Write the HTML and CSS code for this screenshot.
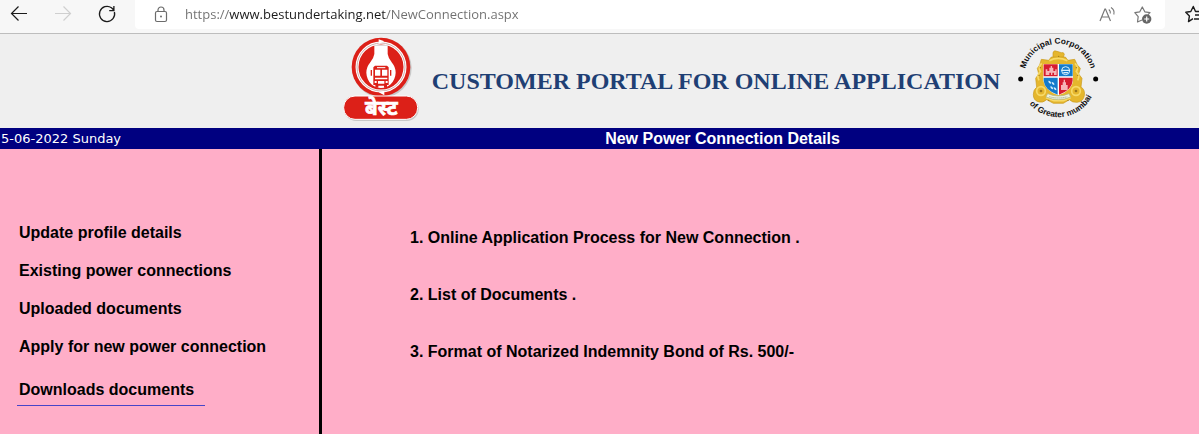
FILE: index.html
```html
<!DOCTYPE html>
<html lang="en">
<head>
<meta charset="utf-8">
<title>New Power Connection Details</title>
<link rel="stylesheet" href="styles.css">
</head>
<body>
<div class="toolbar">
  <div class="nav-buttons">
    <button class="icon-button" type="button" aria-label="Back">
      <svg width="18" height="18" viewBox="0 0 18 18"><path d="M17 8.500H2M8.500 1.500L1.500 8.500l7 7" fill="none" stroke="#1b1b1b" stroke-width="1.200"/></svg>
    </button>
    <button class="icon-button" type="button" aria-label="Forward" disabled>
      <svg width="18" height="18" viewBox="0 0 18 18"><path d="M1 8.500h15M9.500 1.500l7 7-7 7" fill="none" stroke="#cfcfcf" stroke-width="1.200"/></svg>
    </button>
    <button class="icon-button" type="button" aria-label="Refresh">
      <svg width="18" height="18" viewBox="0 0 18 18"><path d="M16.400 7A7.600 7.600 0 1 1 13.500 2.800l2.200 2.200M15.900 1v4.700h-4.700" fill="none" stroke="#1b1b1b" stroke-width="1.300"/></svg>
    </button>
  </div>
  <div class="address">
    <svg width="14" height="17" viewBox="0 0 14 17"><rect x="1.500" y="5.500" width="11" height="10" rx="1.500" fill="none" stroke="#6b6b6b" stroke-width="1.200"/><path d="M4 5.500V4a3 3 0 0 1 6 0v1.500" fill="none" stroke="#6b6b6b" stroke-width="1.200"/><circle cx="7" cy="10.500" r="1" fill="#6b6b6b"/></svg>
    <input class="url" type="text" aria-label="Address" value="https://www.bestundertaking.net/NewConnection.aspx">
    <button class="icon-button" type="button" aria-label="Read aloud">
      <svg width="18" height="18" viewBox="0 0 18 18"><path d="M0 15L4.900 3h.6L10.500 15M1.800 11h7" fill="none" stroke="#777" stroke-width="1.200"/><path d="M8.800 3.500q2 1.500 1.500 4M11 1.500q4 2.500 2.800 7" fill="none" stroke="#777" stroke-width="1.100"/></svg>
    </button>
    <button class="icon-button" type="button" aria-label="Add to favourites">
      <svg width="18" height="18" viewBox="0 0 18 18"><path d="M7 14l-4.500 2 .7-5.300L-.2 6.600l5-.8L7.300 1l2.500 4.800 5.200.8-2 2" fill="none" stroke="#777" stroke-width="1.200" stroke-linejoin="round"/><circle cx="11.700" cy="13" r="4.700" fill="#666"/><path d="M9.200 13h5M11.700 10.500v5" stroke="#fff" stroke-width="1.200"/></svg>
    </button>
  </div>
  <button class="icon-button favourites" type="button" aria-label="Favourites">
    <svg width="18" height="18" viewBox="0 0 18 18"><path d="M8 13.600l-4.500 3 .9-5.500L.8 7.300l5-.8L8.300 1.500l2.200 5H16M10 10h7M9 14h8" fill="none" stroke="#1b1b1b" stroke-width="1.400" stroke-linejoin="round"/></svg>
  </button>
</div>

<header class="banner">
  <svg class="best-logo" viewBox="20 10 240 258" role="img" aria-label="BEST">
    <g fill="#c8c8c8"><circle cx="140" cy="106" r="89"/><rect x="27" y="193" width="223" height="72" rx="35"/></g>
    <circle cx="137" cy="103" r="88" fill="#dc2018"/>
    <circle cx="137" cy="103" r="72" fill="none" stroke="#fff" stroke-width="9"/>
    <circle cx="137" cy="103" r="72" fill="none" stroke="#b98582" stroke-width="2"/>
    <path d="M130 20l17 6-17 8zM147 174l-17 5 17 9z" fill="#fff"/>
    <path d="M117 38h40v26q2 14 13 26 11 13 11 30-1 20-15 35-11 11-29 11t-29-11q-14-15-15-35 0-17 11-30 11-12 13-26z" fill="#fff"/>
    <path d="M117 38h40" stroke="#d9d9d9" stroke-width="3"/>
    <path d="M114 104l5-5h36l5 5v53h-5v8h-9v-6h-17v6h-9v-8h-6z" fill="#dc2018"/>
    <path d="M119 111h16v18h-16zM140 111h16v18h-16zM119 135h37v5h-37zM128 145h19v8h-19zM118 145h6v6h-6zM151 145h6v6h-6z" fill="#fff"/>
    <path d="M125 105h25" stroke="#fff" stroke-width="3"/>
    <path d="M108 112v17M166 112v17" stroke="#dc2018" stroke-width="4"/>
    <rect x="25" y="190" width="222" height="70" rx="34" fill="#dc2018" stroke="#fff" stroke-width="3"/>
    <text class="best-name" x="138" y="247" text-anchor="middle">बेस्ट</text>
  </svg>
  <h1 class="portal-title">CUSTOMER PORTAL FOR ONLINE APPLICATION</h1>
  <svg class="emblem" viewBox="26 14 264 264" role="img" aria-label="Municipal Corporation of Greater mumbai">
    <defs>
      <path id="arc-top" d="M60 114A102 102 0 0 1 256 114"/>
      <path id="arc-bottom" d="M68 216A114 114 0 0 0 262 194"/>
    </defs>
    <text class="ring-text"><textPath href="#arc-top" startOffset="50%" text-anchor="middle">Municipal Corporation</textPath></text>
    <text class="ring-text"><textPath href="#arc-bottom" startOffset="50%" text-anchor="middle">of Greater mumbai</textPath></text>
    <circle cx="46" cy="146" r="7.500"/><circle cx="271" cy="146" r="7.500"/>
    <g fill="#e5b62d" stroke="#c89a1c" stroke-width="2">
      <path d="M143 66q4-7 12-3l13 4q8-2 9 5l-4 11h-30z"/>
      <path d="M108 87l22 3 8-10h42l8 10 20-3 8 17 9 10-5 17 10 13-3 26q13 8 10 26-3 18-22 20-14 1-23-8l-18 11h-30l-20-11q-11 11-26 6-14-5-14-21 0-15 10-22l-3-27 9-13-4-17 7-10z"/>
    </g>
    <g fill="none" stroke="#f7da68" stroke-width="5">
      <circle cx="107" cy="182" r="13"/><circle cx="212" cy="182" r="13"/>
      <path d="M109 99q-12 12-4 24-12 13-4 27M209 99q12 12 4 24 12 13 4 27M132 91q26-14 54 0M122 202l24 9h28l22-9"/>
    </g>
    <g fill="#9b761c"><circle cx="107" cy="182" r="4"/><circle cx="212" cy="182" r="4"/><circle cx="105" cy="112" r="2"/><circle cx="213" cy="112" r="2"/><circle cx="101" cy="135" r="2"/><circle cx="217" cy="135" r="2"/><circle cx="160" cy="78" r="2"/><circle cx="130" cy="210" r="2"/><circle cx="188" cy="210" r="2"/></g>
    <path d="M114 101h89v50q-2 29-44 44-41-15-45-44z" fill="#fff"/>
    <path d="M115 102h42v36h-42zM161 142h41v9q-2 27-41 42z" fill="#d61d30"/>
    <path d="M161 102h41v36h-41zM115 142h42v51q-40-15-42-42z" fill="#147bcb"/>
    <path d="M121 134v-17h5v5h6v-10h4v-5h4v5h4v10h6v-5h4v17h-8v-7h-5v7h-4v-7h-5v7z" fill="#f6b5b8"/>
    <circle cx="181" cy="121" r="12" fill="none" stroke="#d7effb" stroke-width="3"/><path d="M168 120h26M174 127h14" stroke="#d7effb" stroke-width="4"/>
    <path d="M129 151q9 1 8 9-8-1-8-9zM139 155q9 1 8 9-8-1-8-9zM135 168q9 1 8 9-8-1-8-9zM145 171q9 1 8 9-8-1-8-9z" fill="#d7effb"/>
    <path d="M167 179v-15h5v-8h3v-8h4v8h3v8h5v15z" fill="#f6b5b8"/>
    <path d="M127 190q32 14 64 0l5 10q-37 16-74 0z" fill="#f1f2dc" stroke="#aab78c" stroke-width="2"/>
    <path d="M132 199q27 8 54 0" fill="none" stroke="#758b74" stroke-width="2" stroke-dasharray="4 2"/>
  </svg>
</header>

<div class="title-bar">
  <p class="date">5-06-2022 Sunday</p>
  <h2 class="page-title">New Power Connection Details</h2>
</div>

<div class="columns">
  <nav class="side-menu" aria-label="Customer menu">
    <a href="#profile">Update profile details</a>
    <a href="#connections">Existing power connections</a>
    <a href="#uploads">Uploaded documents</a>
    <a href="#apply">Apply for new power connection</a>
    <a class="selected" href="#downloads">Downloads documents</a>
  </nav>
  <main class="details">
    <a href="#process">1. Online Application Process for New Connection .</a>
    <a href="#documents">2. List of Documents .</a>
    <a href="#bond">3. Format of Notarized Indemnity Bond of Rs. 500/-</a>
  </main>
</div>
</body>
</html>
```
FILE: styles.css
```css
* {
  box-sizing: border-box;
}

body {
  margin: 0;
  min-height: 100vh;
  display: flex;
  flex-direction: column;
  overflow: hidden;
  background: #ffaec8;
  font-family: "Liberation Sans", Arial, sans-serif;
}

h1, h2, p {
  margin: 0;
}

svg {
  display: block;
  flex: none;
}

.toolbar {
  display: flex;
  align-items: flex-start;
  height: 34px;
  background: #f7f7f7;
  border-bottom: 1px solid #bdbdbd;
  overflow: hidden;
}

.icon-button {
  flex: none;
  padding: 0;
  border: 0;
  background: none;
}

.icon-button svg {
  overflow: visible;
}

.nav-buttons {
  display: flex;
  flex: none;
  gap: 26px;
  width: 135px;
  padding: 5px 0 0 10px;
}

.address {
  flex: 1;
  min-width: 0;
  height: 29px;
  display: flex;
  align-items: center;
  gap: 17px;
  padding: 0 12px 0 19px;
  background: #fff;
  border-radius: 0 0 4px 4px;
}

.url {
  flex: 1;
  min-width: 0;
  height: 29px;
  padding: 0 0 2px;
  border: 0;
  outline: 0;
  font: 13px/20px "Open Sans", "Noto Sans", sans-serif;
  color: transparent;
  background: linear-gradient(90deg, #6f6f6f 44px, #1b1b1b 44px, #1b1b1b 201px, #6f6f6f 201px);
  -webkit-background-clip: text;
  background-clip: text;
}

.favourites {
  width: 34px;
  padding: 5px 0 0 20px;
}

.banner {
  display: flex;
  align-items: center;
  justify-content: center;
  height: 94px;
  padding: 0 0 4px 245px;
  background: #efefef;
}

.best-logo {
  width: 80px;
  height: 86px;
}

.best-name {
  font: bold 62px "Noto Sans", "Noto Sans Devanagari", sans-serif;
  fill: #fff;
  stroke: #fff;
  stroke-width: 2px;
}

.portal-title {
  margin: 4px 14px 0 10px;
  font: bold 24px/30px "Liberation Serif", "Times New Roman", serif;
  color: #1f3f74;
  white-space: nowrap;
}

.emblem {
  width: 88px;
  height: 88px;
}

.ring-text {
  font: bold 25px "Liberation Sans", Arial, sans-serif;
  fill: #111;
}

.title-bar {
  display: grid;
  grid-template-columns: 246px 1fr;
  align-items: center;
  height: 21px;
  background: #000080;
  color: #fff;
}

.date {
  padding-left: 1px;
  font: 13px/21px "DejaVu Sans", Verdana, sans-serif;
}

.page-title {
  font-size: 16px;
  line-height: 21px;
  text-align: center;
}

.columns {
  flex: 1;
  display: grid;
  grid-template-columns: 322px 1fr;
}

.columns a {
  color: #000;
  font-size: 16px;
  font-weight: bold;
  line-height: 20px;
  text-decoration: none;
}

.side-menu {
  display: flex;
  flex-direction: column;
  align-items: flex-start;
  gap: 18px;
  padding: 74px 17px 0;
  border-right: 3px solid #000;
}

.side-menu a {
  padding: 0 2px;
}

.side-menu .selected {
  margin-top: 5px;
  padding: 0 11px 5px 2px;
  border-bottom: 1px solid #4646c8;
}

.details {
  display: flex;
  flex-direction: column;
  align-items: flex-start;
  gap: 37px;
  padding: 79px 20px 0 88px;
}
```
